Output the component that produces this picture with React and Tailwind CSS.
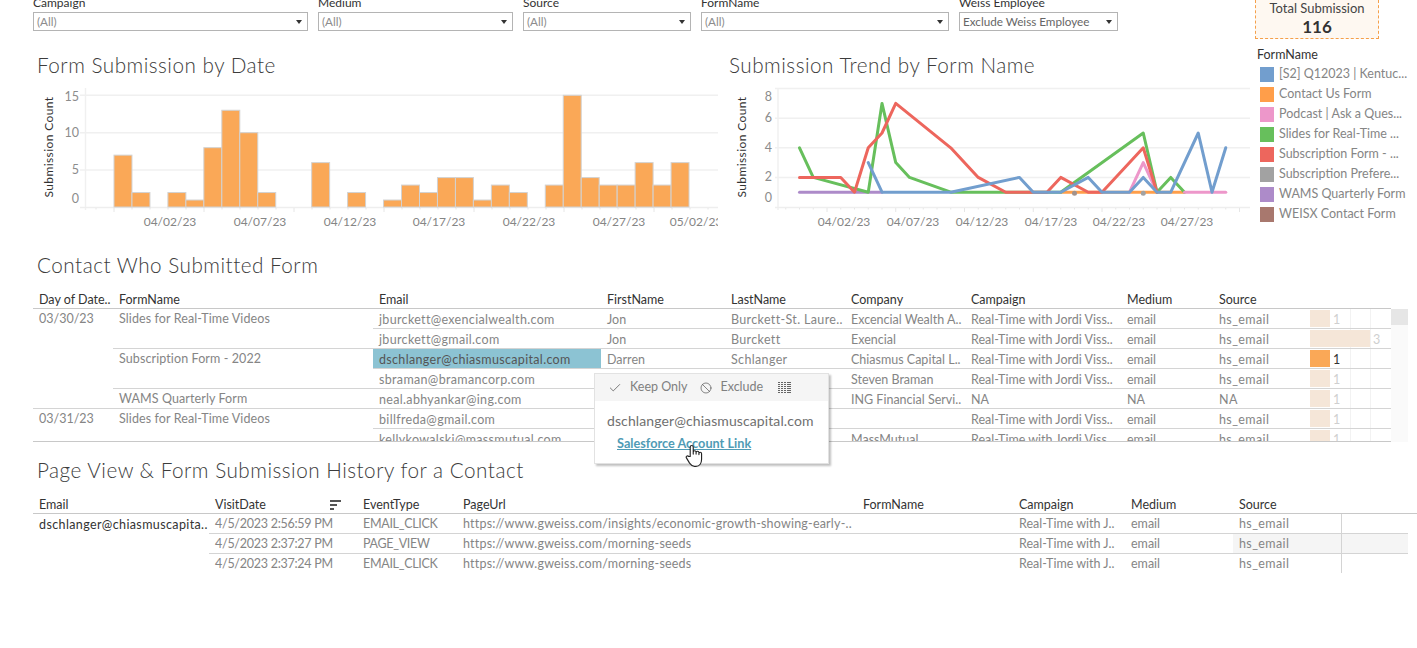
import React from 'react';
import { Check, Ban } from 'lucide-react';

const barData = { 0: 7, 1: 2, 3: 2, 4: 1, 5: 8, 6: 13, 7: 10, 8: 2, 11: 6, 13: 2, 15: 1, 16: 3, 17: 2, 18: 4, 19: 4, 20: 1, 21: 3, 22: 2, 24: 3, 25: 15, 26: 4, 27: 3, 28: 3, 29: 6, 30: 3, 31: 6 };

const lines = [
    { color: '#ad8bc9', pts: [[0, 1], [6, 1]] },
    { color: '#ff9e4a', pts: [[19, 1], [28, 1]] },
    { color: '#ed97ca', pts: [[24, 1], [25, 3], [26, 1]] },
    { color: '#67bf5c', pts: [[0, 4], [1, 2], [5, 1], [6, 7], [7, 3], [8, 2], [11, 1], [19, 1], [25, 5], [26, 1], [27, 2], [28, 1]] },
    { color: '#ed665d', pts: [[0, 2], [3, 2], [4, 1], [5, 4], [6, 5], [7, 7], [11, 4], [13, 2], [15, 1], [18, 1], [19, 2], [21, 1], [22, 1], [25, 4], [26, 1]] },
    { color: '#ed97ca', pts: [[28, 1], [31, 1]] },
    { color: '#729ece', pts: [[5, 3], [6, 1], [11, 1], [16, 2], [17, 1], [19, 1], [21, 2], [22, 1], [24, 1], [25, 2], [26, 1], [27, 1], [29, 5], [30, 1], [31, 4]] },
];

const legend = [
    ['#729ece', '[S2] Q12023 | Kentuc...'],
    ['#ff9e4a', 'Contact Us Form'],
    ['#ed97ca', 'Podcast | Ask a Ques...'],
    ['#67bf5c', 'Slides for Real-Time ...'],
    ['#ed665d', 'Subscription Form - ...'],
    ['#a2a2a2', 'Subscription Prefere...'],
    ['#ad8bc9', 'WAMS Quarterly Form'],
    ['#a8786e', 'WEISX Contact Form'],
];

const campaign = 'Real-Time with Jordi Viss..';

// names under the tooltip are left empty, they can't be seen anyway
const contactGroups = [
    {
        day: '03/30/23',
        forms: [
            {
                name: 'Slides for Real-Time Videos',
                rows: [
                    { email: 'jburckett@exencialwealth.com', first: 'Jon', last: 'Burckett-St. Laure..', company: 'Excencial Wealth A..', campaign, medium: 'email', source: 'hs_email', count: 1 },
                    { email: 'jburckett@gmail.com', first: 'Jon', last: 'Burckett', company: 'Exencial', campaign, medium: 'email', source: 'hs_email', count: 3 },
                ],
            },
            {
                name: 'Subscription Form - 2022',
                rows: [
                    { email: 'dschlanger@chiasmuscapital.com', first: 'Darren', last: 'Schlanger', company: 'Chiasmus Capital L..', campaign, medium: 'email', source: 'hs_email', count: 1, selected: true },
                    { email: 'sbraman@bramancorp.com', first: '', last: '', company: 'Steven Braman', campaign, medium: 'email', source: 'hs_email', count: 1 },
                ],
            },
            {
                name: 'WAMS Quarterly Form',
                rows: [
                    { email: 'neal.abhyankar@ing.com', first: '', last: '', company: 'ING Financial Servi..', campaign: 'NA', medium: 'NA', source: 'NA', count: 1 },
                ],
            },
        ],
    },
    {
        day: '03/31/23',
        forms: [
            {
                name: 'Slides for Real-Time Videos',
                rows: [
                    { email: 'billfreda@gmail.com', first: '', last: '', company: '', campaign, medium: 'email', source: 'hs_email', count: 1 },
                    { email: 'kellykowalski@massmutual.com', first: '', last: '', company: 'MassMutual', campaign, medium: 'email', source: 'hs_email', count: 1 },
                ],
            },
        ],
    },
];

const historyRows = [
    { date: '4/5/2023 2:56:59 PM', type: 'EMAIL_CLICK', url: 'https://www.gweiss.com/insights/economic-growth-showing-early-..' },
    { date: '4/5/2023 2:37:27 PM', type: 'PAGE_VIEW', url: 'https://www.gweiss.com/morning-seeds', hovered: true },
    { date: '4/5/2023 2:37:24 PM', type: 'EMAIL_CLICK', url: 'https://www.gweiss.com/morning-seeds' },
];

const Filter = ({ label, value, width, dark }) => (
    <div className={width}>
        <div className="h-[16px] leading-[13px] text-[12px] text-[#333] whitespace-nowrap">{label}</div>
        <div className={`h-[19px] border border-[#b4b4b4] flex items-center justify-between pl-[3px] pr-[5px] text-[11.7px] ${dark ? 'text-[#666]' : 'text-[#8c8c8c]'}`}>
            <span>{value}</span>
            <span className="w-0 h-0 border-x-[3px] border-x-transparent border-t-[4px] border-t-[#333]"></span>
        </div>
    </div>
);

const Title = ({ children }) => (
    <h2 className="h-[24px] leading-[22px] text-[20.7px] font-light tracking-[0.5px] text-[#3c3c3c] whitespace-nowrap">{children}</h2>
);

const AxisTitle = ({ x, y }) => (
    <text x={x} y={y} transform={`rotate(-90 ${x} ${y})`} textAnchor="middle" className="fill-[#333] text-[12px] tracking-[0.4px]">Submission Count</text>
);

const BarChart = () => {
    const yOf = (v) => 207.5 - v * 7.48;
    const bars = Object.entries(barData);
    return (
        <svg className="block" width="681" height="150" viewBox="37 85 681 150">
            {[15, 10, 5].map((v) => (
                <line key={v} x1="80" x2="718" y1={yOf(v)} y2={yOf(v)} stroke="#f0f0f0" strokeWidth="1.5" />
            ))}
            <line x1="85.5" x2="85.5" y1="88" y2="210" stroke="#f0f0f0" strokeWidth="1.5" />
            <line x1="80" x2="718" y1="207.5" y2="207.5" stroke="#eeeeee" strokeWidth="1.5" />
            {Array.from({ length: 35 }).map((_, i) => (
                <line key={i} x1={96 + i * 18} x2={96 + i * 18} y1="208" y2={(i + 4) % 5 === 0 ? 212 : 209.5} stroke="#e6e6e6" />
            ))}
            {bars.map(([d, v]) => (
                <rect key={d} x={114 + d * 17.97} y={yOf(v)} width="17.97" height={207 - yOf(v)} fill="#faa857" stroke="#d2d2d2" strokeWidth="1" />
            ))}
            {[[15, 97], [10, 133], [5, 170], [0, 199]].map(([v, y]) => (
                <text key={v} x="79" y={y + 4} textAnchor="end" className="fill-[#8c8c8c] text-[12.5px]">{v}</text>
            ))}
            {[[170, '04/02/23'], [260, '04/07/23'], [350, '04/12/23'], [439, '04/17/23'], [529, '04/22/23'], [619, '04/27/23'], [696, '05/02/23']].map(([x, t]) => (
                <text key={t} x={x} y="226" textAnchor="middle" className="fill-[#858585] text-[12px]">{t}</text>
            ))}
            <AxisTitle x="53" y="147" />
        </svg>
    );
};

const LineChart = () => {
    const xOf = (d) => 799.5 + d * 13.75;
    const yOf = (v) => 207 - v * 14.8;
    return (
        <svg className="block" width="521" height="150" viewBox="729 85 521 150">
            {[8, 6, 4, 2].map((v) => (
                <line key={v} x1="775" x2="1250" y1={yOf(v)} y2={yOf(v)} stroke="#f0f0f0" strokeWidth="1.5" />
            ))}
            <line x1="778" x2="778" y1="88" y2="210" stroke="#f0f0f0" strokeWidth="1.5" />
            <line x1="775" x2="1250" y1="207.5" y2="207.5" stroke="#eeeeee" strokeWidth="1.5" />
            {Array.from({ length: 34 }).map((_, i) => (
                <line key={i} x1={xOf(i - 1)} x2={xOf(i - 1)} y1="208" y2={(i + 1) % 5 === 4 ? 212 : 209.5} stroke="#e6e6e6" />
            ))}
            {lines.map((l, i) => (
                <polyline key={i} points={l.pts.map(([d, v]) => `${xOf(d)},${yOf(v)}`).join(' ')} fill="none" stroke={l.color} strokeWidth="3" strokeLinejoin="round" strokeLinecap="round" />
            ))}
            <circle cx={xOf(20)} cy={yOf(1) + 1} r="2.5" fill="#a2928c" />
            <circle cx={xOf(25)} cy={yOf(1) + 1} r="2.5" fill="#a2a2a2" />
            {[[97, 8], [118, 6], [148, 4], [177, 2], [198, 0]].map(([y, v]) => (
                <text key={v} x="772" y={y + 4} textAnchor="end" className="fill-[#8c8c8c] text-[12.5px]">{v}</text>
            ))}
            {[[844, '04/02/23'], [913, '04/07/23'], [982, '04/12/23'], [1051, '04/17/23'], [1119, '04/22/23'], [1187, '04/27/23']].map(([x, t]) => (
                <text key={t} x={x} y="226" textAnchor="middle" className="fill-[#858585] text-[12px]">{t}</text>
            ))}
            <AxisTitle x="746" y="147" />
        </svg>
    );
};

const Cell = ({ width, className = '', children }) => (
    <div className={`${width} pl-[6px] whitespace-nowrap overflow-hidden h-full flex items-center ${className}`}>{children}</div>
);

const CountBar = ({ count, selected }) => (
    <div className="relative w-[86px] h-full flex items-center pl-[5px]">
        <span className="absolute left-[45px] top-0 bottom-0 w-px bg-[#f2f2f2]"></span>
        <span className="absolute left-[65px] top-0 bottom-0 w-px bg-[#f2f2f2]"></span>
        <span className={`relative h-[17px] ${count === 3 ? 'w-[60px]' : 'w-[20px]'} ${selected ? 'bg-[#faa857]' : 'bg-[#f5e6d8]'}`}></span>
        <span className={`relative ml-[3px] pt-[3px] ${selected ? 'text-[#333]' : 'text-[#cfcfcf]'}`}>{count}</span>
    </div>
);

const ContactRow = ({ row, last }) => (
    <div className={`flex text-[12.5px] text-[#858585] ${last ? 'h-[19px]' : 'h-[20px] border-b border-[#d4d4d4]'}`}>
        <Cell width={`w-[228px] ${row.selected ? 'bg-[#8cc3d3] text-[#555]' : ''}`} className="pt-[3px] tracking-[0.33px]">{row.email}</Cell>
        <Cell width="w-[124px]" className="pt-[3px]">{row.first}</Cell>
        <Cell width="w-[120px]" className="pt-[3px] tracking-[0.35px]">{row.last}</Cell>
        <Cell width="w-[120px]" className="pt-[3px]">{row.company}</Cell>
        <Cell width="w-[156px]" className="pt-[3px]">{row.campaign}</Cell>
        <Cell width="w-[92px]" className="pt-[3px]">{row.medium}</Cell>
        <Cell width="w-[92px]" className="pt-[3px] tracking-[0.4px]">{row.source}</Cell>
        <CountBar count={row.count} selected={row.selected} />
    </div>
);

const ContactTable = () => (
    <div className="ml-[33px] text-[12.5px]">
        <div className="flex h-[17px] w-[1358px] border-b border-[#c8c8c8] text-[#333]">
            <Cell width="w-[80px]">Day of Date..</Cell>
            <Cell width="w-[260px]">FormName</Cell>
            <Cell width="w-[228px]">Email</Cell>
            <Cell width="w-[124px]">FirstName</Cell>
            <Cell width="w-[120px]">LastName</Cell>
            <Cell width="w-[120px]">Company</Cell>
            <Cell width="w-[156px]">Campaign</Cell>
            <Cell width="w-[92px]">Medium</Cell>
            <Cell width="w-[92px]">Source</Cell>
        </div>
        <div className="flex">
            <div className="w-[1358px] h-[133px] overflow-hidden border-b border-[#c8c8c8]">
                {contactGroups.map((group, g) => (
                    <div key={group.day} className={`flex text-[#858585] ${g === 0 ? 'border-b border-[#d4d4d4]' : ''}`}>
                        <div className="w-[80px] pl-[6px] h-[19px] leading-[20px]">{group.day}</div>
                        <div className="w-[1278px]">
                            {group.forms.map((form, f) => (
                                <div key={form.name} className={`flex ${f < group.forms.length - 1 ? 'border-b border-[#d4d4d4]' : ''}`}>
                                    <div className="w-[260px] pl-[6px] h-[19px] leading-[20px] tracking-[0.1px]">{form.name}</div>
                                    <div className="w-[1018px]">
                                        {form.rows.map((row, r) => (
                                            <ContactRow key={row.email} row={row} last={r === form.rows.length - 1} />
                                        ))}
                                    </div>
                                </div>
                            ))}
                        </div>
                    </div>
                ))}
            </div>
            <div className="w-[17px] h-[133px] bg-[#fafafa]">
                <div className="h-[16px] bg-[#e6e6e6]"></div>
            </div>
        </div>
    </div>
);

const SortIcon = () => (
    <svg width="12" height="10" viewBox="0 0 12 10" className="shrink-0">
        <rect x="0" y="0" width="11" height="2" fill="#555" />
        <rect x="0" y="4" width="7" height="2" fill="#555" />
        <rect x="0" y="8" width="4" height="2" fill="#555" />
    </svg>
);

const HistoryTable = () => (
    <div className="ml-[33px] text-[12.5px]">
        <div className="flex h-[17px] border-b border-[#c8c8c8] text-[#333]">
            <Cell width="w-[176px]">Email</Cell>
            <Cell width="w-[148px] justify-between pr-[15px]">VisitDate<SortIcon /></Cell>
            <Cell width="w-[100px]">EventType</Cell>
            <Cell width="w-[400px]">PageUrl</Cell>
            <Cell width="w-[156px]">FormName</Cell>
            <Cell width="w-[112px]">Campaign</Cell>
            <Cell width="w-[108px]">Medium</Cell>
            <Cell width="w-[108px]">Source</Cell>
        </div>
        <div className="flex h-[59px] overflow-hidden">
            <div className="w-[176px] pl-[6px] h-[19px] leading-[21px] text-[#333] tracking-[0.38px] whitespace-nowrap">dschlanger@chiasmuscapita..</div>
            <div className="w-[1199px]">
                {historyRows.map((row) => (
                    <div key={row.date} className="flex h-[20px] border-b border-[#d4d4d4] text-[#858585]">
                        <Cell width="w-[148px]" className="pt-[2px] tracking-[-0.26px]">{row.date}</Cell>
                        <Cell width="w-[100px]" className="pt-[2px] tracking-[-0.3px]">{row.type}</Cell>
                        <Cell width="w-[400px]" className="pt-[2px] tracking-[0.2px]">{row.url}</Cell>
                        <Cell width="w-[156px]"></Cell>
                        <Cell width="w-[112px]" className="pt-[2px]">Real-Time with J..</Cell>
                        <Cell width="w-[108px]" className="pt-[2px]">email</Cell>
                        <Cell width={`w-[108px] ${row.hovered ? 'bg-[#f5f5f5]' : ''}`} className="pt-[2px] tracking-[0.4px]">hs_email</Cell>
                        <div className={`w-[67px] h-full border-l border-[#d4d4d4] ${row.hovered ? 'bg-[#f5f5f5]' : ''}`}></div>
                    </div>
                ))}
            </div>
        </div>
    </div>
);

const TableIcon = () => (
    <svg width="13" height="11" viewBox="0 0 13 11" className="ml-[15px]">
        {[0, 2, 4, 6, 8, 10].flatMap((y) => [0, 3, 6, 9, 11].map((x) => (
            <rect key={`${x}-${y}`} x={x} y={y} width="2" height="1" fill="#666" />
        )))}
    </svg>
);

const HandCursor = () => (
    <svg className="absolute left-[90px] top-[70px]" width="18" height="24" viewBox="0 0 19 25">
        <path d="M5.5 13 V3 a1.6 1.6 0 0 1 3.2 0 V10.5 V8.5 a1.5 1.5 0 0 1 3 0 V10.5 V9 a1.5 1.5 0 0 1 3 0 V11 V10 a1.4 1.4 0 0 1 2.8 0 V16 c0 4 -2 7.5 -6 7.5 H10 c-3 0 -4 -2 -5.5 -4 L1.5 14.5 c-1 -1.5 1 -3 2.5 -1.5 Z" fill="#fff" stroke="#222" strokeWidth="1.2" strokeLinejoin="round" />
    </svg>
);

const Tooltip = () => (
    <div className="absolute left-[594px] top-[373px] w-[235px] h-[91px] bg-white border border-[#e2e2e2] shadow-[2px_2px_2px_rgba(0,0,0,0.25)]">
        <div className="h-[27px] bg-[#f5f5f5] flex items-center pl-[13px] text-[12.5px] text-[#808080]">
            <Check size={14} strokeWidth={1.3} className="text-[#555]" />
            <span className="ml-[8px]">Keep Only</span>
            <Ban size={12} strokeWidth={1.4} className="ml-[13px] text-[#555]" />
            <span className="ml-[8px]">Exclude</span>
            <TableIcon />
        </div>
        <div className="pl-[12px] pt-[11px] text-[14px] leading-[18px] text-[#707070] tracking-[0.1px] whitespace-nowrap">dschlanger@chiasmuscapital.com</div>
        <div className="pl-[22px] pt-[5px] text-[12.7px] leading-[16px] font-bold text-[#4f9bb5] underline whitespace-nowrap">Salesforce Account Link</div>
        <HandCursor />
    </div>
);

const App = () => {
    return (
        <div className="relative w-[1417px] h-[648px] overflow-hidden bg-white font-[Lato,sans-serif]">
            <div className="flex h-[254px]">
                <div className="w-[1250px]">
                    <div className="flex gap-[10px] pl-[33px] -mt-[4px]">
                        <Filter label="Campaign" value="(All)" width="w-[275px]" />
                        <Filter label="Medium" value="(All)" width="w-[195px]" />
                        <Filter label="Source" value="(All)" width="w-[168px]" />
                        <Filter label="FormName" value="(All)" width="w-[248px]" />
                        <Filter label="Weiss Employee" value="Exclude Weiss Employee" width="w-[159px]" dark />
                    </div>
                    <div className="flex pl-[37px] mt-[23px]">
                        <div className="w-[692px]">
                            <Title>Form Submission by Date</Title>
                            <div className="mt-[7px]"><BarChart /></div>
                        </div>
                        <div className="w-[521px]">
                            <Title>Submission Trend by Form Name</Title>
                            <div className="mt-[7px]"><LineChart /></div>
                        </div>
                    </div>
                </div>
                <div className="w-[167px] pl-[5px]">
                    <div className="w-[124px] h-[39px] bg-[#fef8f1] border-x border-b border-dashed border-[#f5a04b] text-center">
                        <div className="text-[13px] leading-[16px] text-[#444]">Total Submission</div>
                        <div className="text-[17px] leading-[22px] font-bold text-[#333]">116</div>
                    </div>
                    <div className="mt-[7px] pl-[2px] h-[17px] text-[12.5px] leading-[17px] text-[#333]">FormName</div>
                    <div className="mt-[1px] pl-[5px]">
                        {legend.map(([color, label]) => (
                            <div key={label} className="flex items-center h-[20px] gap-[5px] text-[12.5px] text-[#858585] whitespace-nowrap">
                                <span className="w-[14px] h-[15px] shrink-0" style={{ backgroundColor: color }}></span>
                                {label}
                            </div>
                        ))}
                    </div>
                </div>
            </div>
            <div className="pl-[37px]"><Title>Contact Who Submitted Form</Title></div>
            <div className="mt-[14px]"><ContactTable /></div>
            <div className="pl-[37px] mt-[17px]"><Title>Page View &amp; Form Submission History for a Contact</Title></div>
            <div className="mt-[14px]"><HistoryTable /></div>
            <Tooltip />
        </div>
    );
};

export default App;
